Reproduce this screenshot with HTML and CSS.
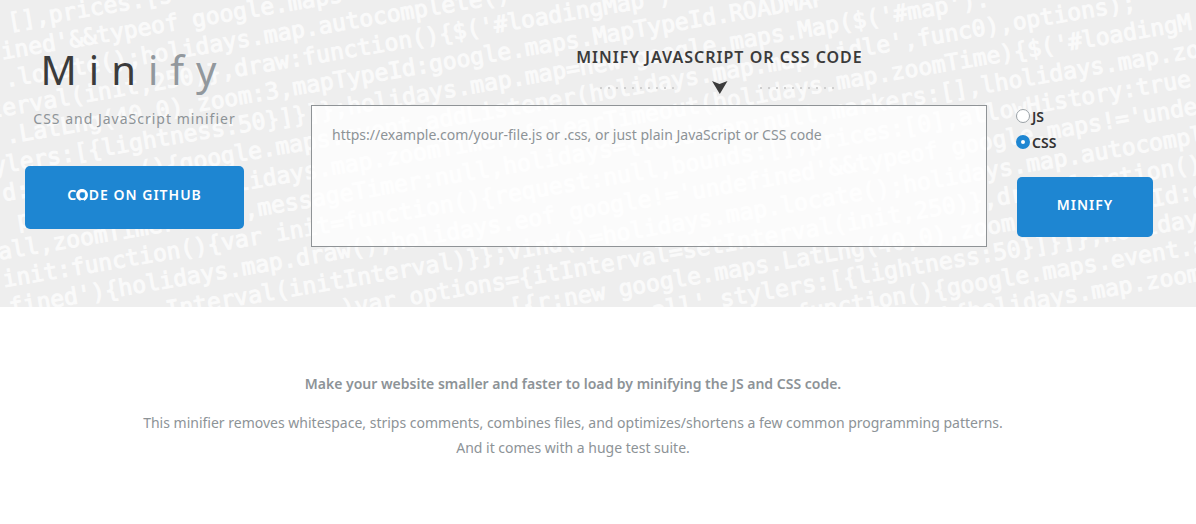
FILE: index.html
```html
<!DOCTYPE html>
<html lang="en">
<head>
<meta charset="utf-8">
<meta name="viewport" content="width=device-width, initial-scale=1">
<title>Minify</title>
<link rel="stylesheet" href="styles.css">
</head>
<body>
<header class="hero">
  <svg class="hero-code" aria-hidden="true">
    <g transform="rotate(-9.6)">
      <text x="4" y="31">[],prices.[s</text>
      <text x="-77" y="59">undefined'&amp;&amp;typeof google.maps</text>
      <text x="-9" y="87">.locate();holidays.map.autocomplete()</text>
      <text x="-99" y="115">setInterval(init,250)},draw:function(){$('#loadingMap')</text>
      <text x="-17" y="143">.LatLng(40,0),zoom:3,mapTypeId:google.maps.MapTypeId.ROADMAP</text>
      <text x="-63" y="171">stylers:[{lightness:50}]}]};holidays.map.map=new google.maps.Map($('#map').</text>
      <text x="-30" y="199">d:function(){google.maps.event.addListener(holidays.map.map,'idle',func0),options);</text>
      <text x="-20" y="228">p').show();if(holidays.map.zoomTimer){clearTimeout(holidays.map.zoomTime){$('#loadingM</text>
      <text x="-44" y="256">all,zoomTimer:null,messageTimer:null,holidays={load:map:null,markers:[],lholidays.map.zoom</text>
      <text x="-44" y="284">init:function(){var init=function(){request:null,bounds:[],prices:[0],allowHistory:true,</text>
      <text x="-42" y="312">fined'){holidays.map.draw();holidays.eof google!='undefined'&amp;&amp;typeof google.maps!='undefined</text>
      <text x="112" y="341">Interval(initInterval)}};vind()=holidays.map.locate();holidays.map.autocomplete</text>
      <text x="285" y="369">)var options={itInterval=setInterval(init,250)},draw:function(){</text>
      <text x="451" y="396">[{r:new google.maps.LatLng(40,0),zoom:3,mapTypeId:google</text>
      <text x="591" y="423">all' stylers:[{lightness:50}]}]};holidays.map</text>
      <text x="664" y="450">init:function(){google.maps.event.add</text>
      <text x="875" y="477">){holidays.map.zoomTimer</text>
    </g>
  </svg>

  <div class="brand">
    <h1 class="brand-name">Min<span class="brand-light">ify</span></h1>
    <p class="brand-tagline">CSS and JavaScript minifier</p>
    <a class="button button-github" href="#">
      <svg class="github-mark" viewBox="0 0 12 12" aria-hidden="true">
        <path fill="#fff" d="M6 0C2.600 0 .2 2.700.2 6c0 2.700 1.600 4.900 3.900 5.700.3.100.5-.1.500-.4V9.800C3 10 2.500 9 2.300 8.600c1 .9 1.500.5 2.300.2C3.300 8.500 2.300 7.500 2.300 6c0-.7.200-1.300.6-1.700-.1-.6 0-1.200.1-1.500.6 0 1.200.3 1.700.6.900-.2 1.800-.2 2.700 0 .5-.3 1.100-.6 1.700-.6.2.4.2 1 .1 1.500.4.5.6 1 .6 1.700 0 1.700-1 2.500-2.300 2.800.3.300.4.600.4 1v1.500c0 .3.200.5.5.4 2.100-.8 3.500-3 3.500-5.700C11.900 2.700 9.400 0 6 0Z"/>
      </svg>
      CODE ON GITHUB
    </a>
  </div>

  <form class="minifier">
    <h2 class="minifier-title"><label for="source">MINIFY JAVASCRIPT OR CSS CODE</label></h2>
    <div class="divider" aria-hidden="true">
      <span class="dots"></span>
      <svg class="divider-arrow" viewBox="0 0 16 13"><path d="M0 0l7.500 3L15.500 0 7.800 13z"/></svg>
      <span class="dots"></span>
    </div>
    <div class="minifier-row">
      <textarea class="source" id="source" placeholder="https://example.com/your-file.js or .css, or just plain JavaScript or CSS code"></textarea>
      <div class="controls">
        <label class="choice"><input class="radio" type="radio" name="type" value="js">JS</label>
        <label class="choice"><input class="radio" type="radio" name="type" value="css" checked>CSS</label>
        <button class="button button-minify" type="button">MINIFY</button>
      </div>
    </div>
  </form>
</header>

<main class="intro">
  <p class="intro-lead">Make your website smaller and faster to load by minifying the JS and CSS code.</p>
  <p class="intro-text">This minifier removes whitespace, strips comments, combines files, and optimizes/shortens a few common programming patterns.<br>And it comes with a huge test suite.</p>
</main>
</body>
</html>
```
FILE: styles.css
```css
* {
  box-sizing: border-box;
}

body {
  margin: 0;
  background: #fff;
  color: #8d9397;
  font-family: "Noto Sans", "Open Sans", sans-serif;
  font-size: 14px;
  line-height: 25px;
}

h1,
h2,
p {
  margin: 0;
}

.hero {
  position: relative;
  display: flex;
  gap: 67px;
  padding: 44px 43px 60px 25px;
  overflow: hidden;
  background: #eee;
}

.hero-code {
  position: absolute;
  inset: 0;
  width: 100%;
  height: 100%;
  fill: #fafafa;
  stroke: #fafafa;
  stroke-width: 1px;
  font-family: "DejaVu Sans Mono", monospace;
  font-size: 23px;
  white-space: pre;
}

.brand,
.minifier {
  position: relative;
}

.brand {
  flex: none;
  width: 219px;
  text-align: center;
}

.brand-name {
  color: #3b3b3b;
  font-size: 40px;
  font-weight: 400;
  line-height: 52px;
  letter-spacing: 12px;
}

.brand-light {
  color: #92989d;
}

.brand-tagline {
  margin: 10px 0 35px;
  letter-spacing: 1px;
}

.button {
  display: block;
  width: 100%;
  border: 0;
  border-radius: 5px;
  background: #1e86d2;
  color: #fff;
  font: 600 14px/20px "Noto Sans", "Open Sans", sans-serif;
  letter-spacing: 1px;
  text-align: center;
  text-decoration: none;
}

.button-github {
  position: relative;
  padding: 19px 0 24px;
}

.github-mark {
  position: absolute;
  top: 23px;
  left: 51px;
  width: 12px;
  height: 12px;
}

.minifier {
  flex: 1;
  min-width: 0;
}

.minifier-title {
  padding-right: 25px;
  color: #3b3b3b;
  font-size: 16px;
  font-weight: 600;
  line-height: 26px;
  letter-spacing: 1px;
  text-align: center;
}

.divider {
  display: flex;
  align-items: center;
  justify-content: center;
  gap: 80px;
  height: 35px;
  padding-right: 25px;
}

.dots {
  width: 80px;
  height: 2px;
  background: repeating-linear-gradient(90deg, #cfcfcf 0 2px, transparent 2px 8px);
}

.divider-arrow {
  width: 16px;
  height: 13px;
  margin: 0 -48px;
  fill: #3b3b3b;
}

.minifier-row {
  display: flex;
  gap: 30px;
}

.source {
  flex: 1;
  min-width: 0;
  height: 142px;
  padding: 16px 20px;
  border: 1px solid #8f9396;
  background: rgba(255, 255, 255, 0.75);
  color: #3b3b3b;
  font: inherit;
  resize: none;
}

.source::placeholder {
  color: #8d9397;
  opacity: 1;
}

.controls {
  flex: none;
  width: 136px;
}

.choice {
  display: flex;
  align-items: center;
  gap: 2px;
  height: 26px;
  margin-left: -1px;
  color: #333;
  font-weight: 600;
}

.choice:first-child {
  margin-top: -2px;
}

.radio {
  width: 14px;
  height: 14px;
  margin: 0;
  border: 1px solid #9aa1a6;
  border-radius: 50%;
  background: #fff;
  appearance: none;
}

.radio:checked {
  border: 5px solid #1e86d2;
}

.button-minify {
  margin-top: 22px;
  padding: 18px 0 22px;
}

.intro {
  padding: 64px 50px 64px 0;
  text-align: center;
}

.intro-lead {
  margin-bottom: 14px;
  font-weight: 600;
}
```
